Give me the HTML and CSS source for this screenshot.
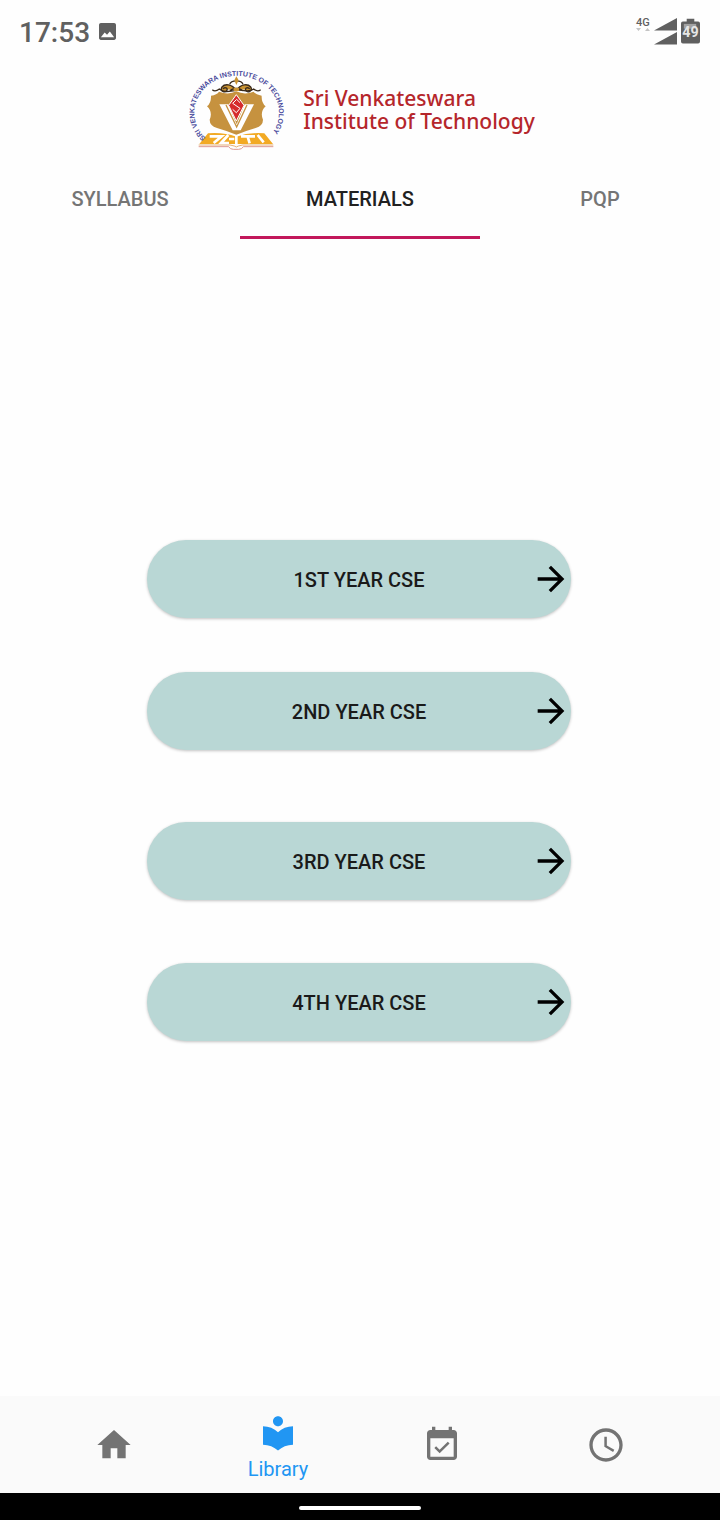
FILE: index.html
```html
<!DOCTYPE html>
<html lang="en">
<head>
<meta charset="utf-8">
<meta name="viewport" content="width=device-width, initial-scale=1">
<title>Materials - Sri Venkateswara Institute of Technology</title>
<link rel="stylesheet" href="styles.css">
</head>
<body>
<div class="status">
  <span class="clock">17:53</span>
  <svg class="status-photo" viewBox="3 3 18 18" aria-hidden="true"><path d="M21 19V5c0-1.100-.9-2-2-2H5c-1.100 0-2 .9-2 2v14c0 1.100.9 2 2 2h14c1.100 0 2-.9 2-2zM5 18l4-5 2.500 2.500L14.500 12l4.500 6z"/></svg>
  <span class="network">4G<svg class="network-arrows" viewBox="0 0 14 3" aria-hidden="true"><path d="M0 0h5L2.500 3zM9 3h5L11.500 0z"/></svg></span>
  <svg class="signal" viewBox="0 0 23 27" aria-hidden="true"><path d="M0 12.500 23 0v12.500zM0 26.500 23 14v12.500z"/></svg>
  <svg class="battery" viewBox="0 0 20 27" role="img" aria-label="Battery 49%">
    <path fill="#606060" d="M6 0h8v3h4q2 0 2 2v19q0 2-2 2H2q-2 0-2-2V5q0-2 2-2h4z"/>
    <path fill="#a2a2a2" d="M3 5.500h13v5H3z"/>
    <text x="10" y="19" text-anchor="middle">49</text>
  </svg>
</div>

<header class="brand">
  <svg class="emblem" viewBox="20 25 300 252" role="img" aria-label="Institute emblem">
    <defs><path id="ring" d="M76 235A127 111 0 1 1 266 231"/></defs>
    <g fill="none" stroke="#3a2b1c" stroke-width="4">
      <path fill="#c99332" d="M168 92c-14-20-35-20-43-10s8 19 14 11-7-12-11-5M168 92c14-20 35-20 43-10s-8 19-14 11 7-12 11-5"/>
      <path d="M96 90q8 8 21-2c14 12 29 7 51 4s37 8 52-4q12 10 21 2M148 74c4-14 36-14 40 0M149 94c8-10 30-10 38 0"/>
    </g>
    <path fill="#c99332" d="M162 62l6-12 7 12-7 14zM160 84h16v10h-16z"/>
    <path fill="#c6923f" d="M92 108q18-3 24-12 28 11 52-1 24 12 52 1 6 9 24 12-1 21 12 32-18 17-8 40 0 18-22 25-34 10-58 20-24-10-58-20-22-7-22-25 10-23-8-40 13-11 12-32z"/>
    <path fill="#fff" d="M117 134h27l25 60 24-60h28l-40 78h-24z"/>
    <path fill="none" stroke="#c6923f" stroke-width="4" d="M137 136l32 66 31-66"/>
    <path fill="#d62b2c" stroke="#fff" stroke-width="3" d="M168 105l23 32-23 47-23-47z"/>
    <path fill="none" stroke="#fff" stroke-width="3" d="M179 129l-10-10-12 12 22 15-11 13-11-10"/>
    <path fill="#f2aa24" d="M83 221q46-4 85 10 39-14 84-10l26 32H57z"/>
    <path fill="none" stroke="#fff" stroke-width="8" d="M88 230h36l-24 20M144 226l-22 24h24M146 238h16M168 229v26M182 230h42M202 231l6 20M232 226l18 22"/>
    <path fill="none" stroke="#d98a35" stroke-width="2" d="M55 256h94q16 3 19 6 3-3 19-6h92"/>
    <path fill="none" stroke="#dd9a91" stroke-width="3" d="M55 261h90q4 8 14 8h16q10 0 14-8h90"/>
    <text class="ring-text"><textPath href="#ring">SRI VENKATESWARA INSTITUTE OF TECHNOLOGY</textPath></text>
  </svg>
  <h1 class="brand-name">Sri Venkateswara<br>Institute of Technology</h1>
</header>

<nav class="tabs" aria-label="Library sections">
  <button class="tab" type="button">SYLLABUS</button>
  <button class="tab active" type="button" aria-current="page">MATERIALS</button>
  <button class="tab" type="button">PQP</button>
</nav>

<main class="years">
  <button class="year" type="button"><span>1ST YEAR CSE</span><svg class="icon" viewBox="0 0 24 24" aria-hidden="true"><path d="M12 4l-1.410 1.410L16.170 11H4v2h12.170l-5.580 5.590L12 20l8-8z"/></svg></button>
  <button class="year second" type="button"><span>2ND YEAR CSE</span><svg class="icon" viewBox="0 0 24 24" aria-hidden="true"><path d="M12 4l-1.410 1.410L16.170 11H4v2h12.170l-5.580 5.590L12 20l8-8z"/></svg></button>
  <button class="year third" type="button"><span>3RD YEAR CSE</span><svg class="icon" viewBox="0 0 24 24" aria-hidden="true"><path d="M12 4l-1.410 1.410L16.170 11H4v2h12.170l-5.580 5.590L12 20l8-8z"/></svg></button>
  <button class="year fourth" type="button"><span>4TH YEAR CSE</span><svg class="icon" viewBox="0 0 24 24" aria-hidden="true"><path d="M12 4l-1.410 1.410L16.170 11H4v2h12.170l-5.580 5.590L12 20l8-8z"/></svg></button>
</main>

<nav class="bottom" aria-label="Main">
  <button class="dest" type="button" aria-label="Home"><svg class="icon" viewBox="0 0 24 24"><path d="M10 20v-6h4v6h5v-8h3L12 3 2 12h3v8z"/></svg></button>
  <button class="dest current" type="button" aria-current="page"><svg class="icon" viewBox="0 0 24 24" aria-hidden="true"><path d="M12 11.550C9.640 9.350 6.480 8 3 8v11c3.480 0 6.640 1.350 9 3.550 2.360-2.190 5.520-3.550 9-3.550V8c-3.480 0-6.640 1.350-9 3.550zM12 8c1.660 0 3-1.340 3-3s-1.340-3-3-3-3 1.340-3 3 1.340 3 3 3z"/></svg><span>Library</span></button>
  <button class="dest" type="button" aria-label="Attendance"><svg class="icon" viewBox="0 0 24 24"><path d="M16.530 11.060L15.470 10l-4.880 4.880-2.120-2.120-1.060 1.060L10.590 17l5.940-5.940zM19 3h-1V1h-2v2H8V1H6v2H5c-1.110 0-1.990.9-1.990 2L3 19c0 1.100.89 2 2 2h14c1.100 0 2-.9 2-2V5c0-1.100-.9-2-2-2zm0 16H5V8h14v11z"/></svg></button>
  <button class="dest" type="button" aria-label="Timetable"><svg class="icon" viewBox="0 0 24 24"><path d="M11.990 2C6.470 2 2 6.480 2 12s4.470 10 9.990 10C17.520 22 22 17.520 22 12S17.520 2 11.990 2zM12 20c-4.420 0-8-3.580-8-8s3.580-8 8-8 8 3.580 8 8-3.580 8-8 8zM12.500 7H11v6l5.250 3.150.75-1.230-4.500-2.670z"/></svg></button>
</nav>
<div class="system"><span class="handle"></span></div>
</body>
</html>
```
FILE: styles.css
```css
* { box-sizing: border-box; }

body {
  display: flex;
  flex-direction: column;
  min-height: 100vh;
  margin: 0;
  background: #fefefe;
  color: #212121;
  font-family: Roboto, "Liberation Sans", sans-serif;
}

button {
  border: 0;
  padding: 0;
  background: none;
  color: inherit;
  font: inherit;
  cursor: pointer;
}

svg { display: block; }

.icon {
  width: 40px;
  height: 40px;
  fill: currentColor;
}

.status {
  display: flex;
  align-items: center;
  height: 62px;
  padding: 0 20px 0 19px;
  color: #606060;
  fill: #606060;
}

.clock {
  padding-top: 3px;
  font-size: 28px;
  line-height: 32px;
  font-weight: 500;
}

.status-photo {
  width: 17px;
  height: 17px;
  margin-left: 9px;
}

.network {
  margin-left: auto;
  padding-bottom: 14px;
  font-size: 11px;
  line-height: 11px;
  font-weight: 500;
}

.network-arrows {
  width: 14px;
  height: 3px;
  fill: #c4c4c4;
}

.signal {
  width: 23px;
  height: 27px;
  margin: 0 4px;
}

.battery {
  width: 19px;
  height: 27px;
}

.battery text {
  fill: #e6e6e6;
  font-size: 15px;
  font-weight: 700;
}

.brand {
  display: flex;
  justify-content: center;
  align-items: center;
  gap: 16px;
  height: 96px;
  padding-left: 2px;
}

.emblem {
  width: 100px;
  height: 84px;
}

.ring-text {
  fill: #4a4b9c;
  font: 700 21px "Liberation Sans", sans-serif;
}

.brand-name {
  margin: 0;
  color: #b5262b;
  font: 500 21px/23px "Noto Sans", "Open Sans", sans-serif;
}

.tabs {
  display: grid;
  grid-template-columns: repeat(3, 1fr);
}

.tab {
  height: 81px;
  padding-top: 3px;
  border-bottom: 3px solid transparent;
  color: #757575;
  font-size: 20px;
  line-height: 24px;
  font-weight: 500;
}

.tab.active {
  border-color: #c2185b;
  color: #212121;
}

.years {
  display: flex;
  flex: 1;
  flex-direction: column;
  align-items: center;
  padding: 301px 2px 54px 0;
}

.year {
  display: grid;
  grid-template-columns: 1fr 40px;
  align-items: center;
  width: 59%;
  height: 78px;
  padding: 0 0 0 40px;
  border-radius: 39px;
  background: #b9d7d5;
  box-shadow: 0 1px 3px rgba(0, 0, 0, 0.24);
  color: #1a1a1a;
  font-size: 20px;
  line-height: 24px;
  font-weight: 500;
}

.year span { padding-top: 2px; }

.year .icon { fill: #000; }

.second { margin-top: 54px; }
.third { margin-top: 72px; }
.fourth { margin-top: 63px; }

.bottom {
  display: grid;
  grid-template-columns: repeat(4, 1fr);
  height: 97px;
  padding: 1px 32px 0;
  background: #fafafa;
  color: #737373;
}

.dest {
  display: flex;
  flex-direction: column;
  align-items: center;
  justify-content: center;
}

.current {
  padding-top: 3px;
  color: #2196f3;
  font-size: 20px;
  line-height: 24px;
}

.current span { padding-top: 4px; }

.system {
  display: flex;
  align-items: center;
  justify-content: center;
  height: 27px;
  padding-top: 2px;
  background: #000;
}

.handle {
  width: 122px;
  height: 4px;
  border-radius: 2px;
  background: #fff;
}
```
